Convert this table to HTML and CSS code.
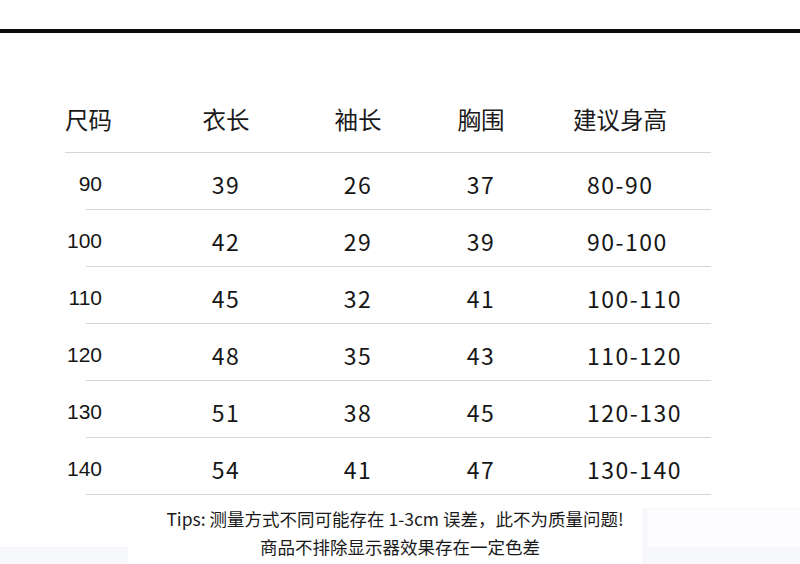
FILE: index.html
```html
<!DOCTYPE html>
<html lang="zh">
<head>
<meta charset="utf-8">
<title>尺码表</title>
<link rel="stylesheet" href="styles.css">
</head>
<body>
<div class="topbar"></div>
<div class="table">
  <div class="row head">
    <div class="c1">尺码</div><div class="c2">衣长</div><div class="c3">袖长</div><div class="c4">胸围</div><div class="c5">建议身高</div>
  </div>
  <div class="row body"><div class="c1 size">90</div><div class="c2">39</div><div class="c3">26</div><div class="c4">37</div><div class="c5">80-90</div></div>
  <div class="row body"><div class="c1 size">100</div><div class="c2">42</div><div class="c3">29</div><div class="c4">39</div><div class="c5">90-100</div></div>
  <div class="row body"><div class="c1 size">110</div><div class="c2">45</div><div class="c3">32</div><div class="c4">41</div><div class="c5">100-110</div></div>
  <div class="row body"><div class="c1 size">120</div><div class="c2">48</div><div class="c3">35</div><div class="c4">43</div><div class="c5">110-120</div></div>
  <div class="row body"><div class="c1 size">130</div><div class="c2">51</div><div class="c3">38</div><div class="c4">45</div><div class="c5">120-130</div></div>
  <div class="row body"><div class="c1 size">140</div><div class="c2">54</div><div class="c3">41</div><div class="c4">47</div><div class="c5">130-140</div></div>
</div>
<div class="tips">
  <p class="tip1">Tips: 测量方式不同可能存在 1-3cm 误差，此不为质量问题!</p>
  <p class="tip2">商品不排除显示器效果存在一定色差</p>
</div>
<div class="ghost ghost-left"></div>
<div class="ghost ghost-right"><div class="ghost-inner"></div></div>
</body>
</html>
```
FILE: styles.css
```css
html, body {
  margin: 0;
  padding: 0;
  background: #fff;
}
body {
  width: 800px;
  height: 564px;
  overflow: hidden;
  position: relative;
  font-family: "Noto Sans CJK SC", "Noto Sans", sans-serif;
  color: #161616;
}
.topbar {
  margin-top: 29px;
  height: 4px;
  background: #0b0b0b;
}
.table {
  margin-top: 62px;
  margin-left: 65px;
  width: 646px;
}
.row {
  display: grid;
  grid-template-columns: 96px 130px 134px 112px 1fr;
  align-items: center;
  box-sizing: border-box;
}
.row.head {
  height: 58px;
  padding-bottom: 9px;
  border-bottom: 1px solid #d6d6d6;
  font-size: 23.5px;
  color: #1a1a1a;
}
.row.body {
  height: 57px;
  padding-top: 4px;
  font-size: 23px;
  letter-spacing: 1.5px;
  background: linear-gradient(#d6d6d6, #d6d6d6) 21px 100% / calc(100% - 21px) 1px no-repeat;
}
.c2, .c3, .c4 {
  text-align: center;
}
.head .c1 {
  text-align: left;
}
.head .c5 {
  padding-left: 36px;
}
.body .c5 {
  padding-left: 50px;
}
.size {
  font-family: "Liberation Sans", Arial, sans-serif;
  font-size: 21px;
  letter-spacing: 0;
  text-align: right;
  padding-right: 59px;
}
.tips {
  padding-top: 10px;
  font-size: 17.5px;
  line-height: 28px;
  text-align: center;
  color: #1a1a1a;
}
.tips p {
  margin: 0;
}
.tip1 {
  padding-right: 10px;
}
.ghost {
  position: absolute;
  background: #f6f8fc;
}
.ghost-left {
  left: 0;
  top: 547px;
  width: 128px;
  height: 17px;
}
.ghost-right {
  left: 642px;
  top: 508px;
  width: 158px;
  height: 56px;
}
.ghost-inner {
  margin: 2px 0 0 6px;
  height: 37px;
  background: #fdfdff;
}
```
